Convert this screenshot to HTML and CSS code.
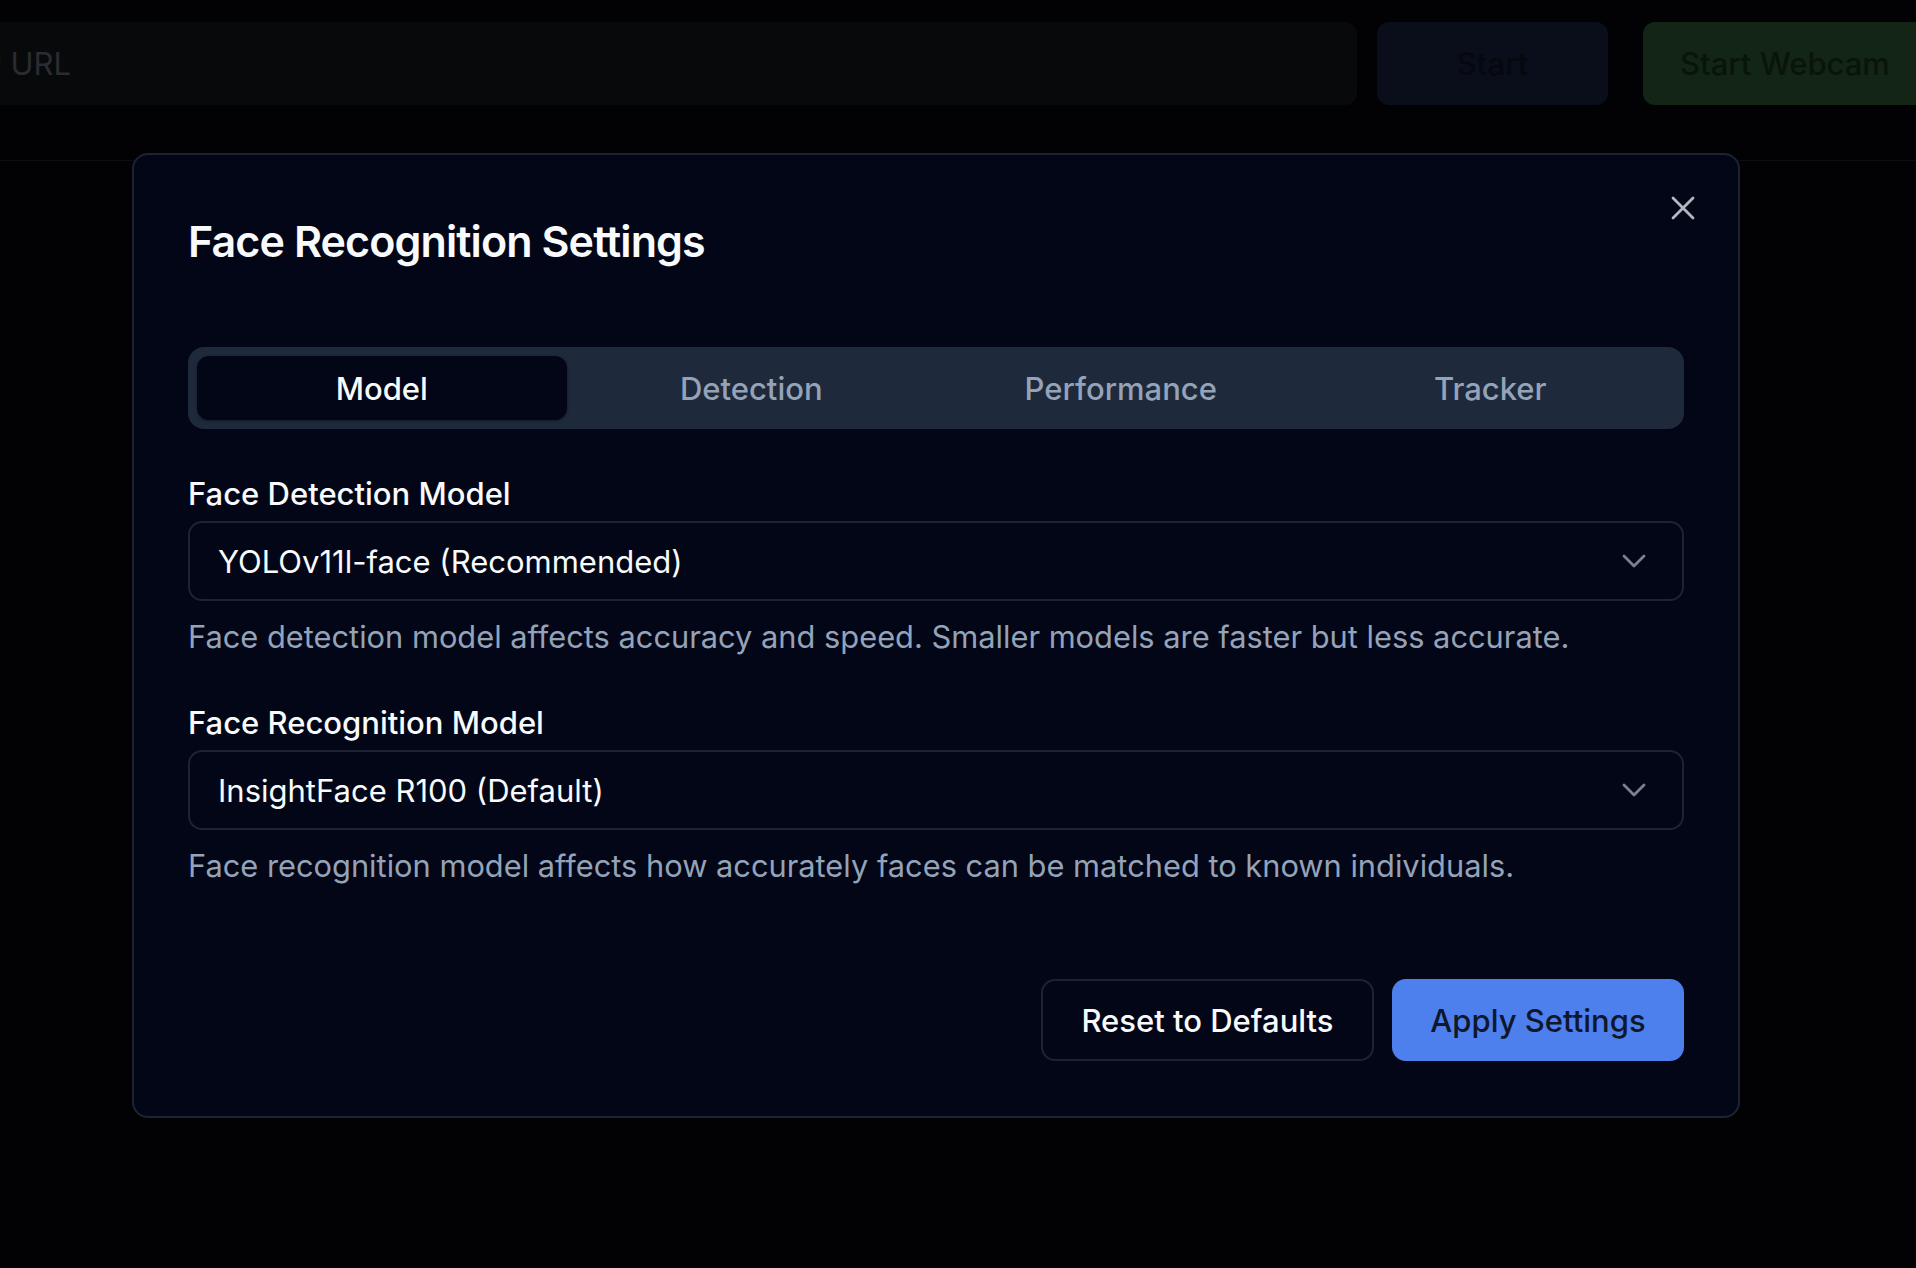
FILE: index.html
```html
<!DOCTYPE html>
<html lang="en">
<head>
<meta charset="utf-8">
<title>Face Recognition Settings</title>
<link rel="stylesheet" href="styles.css">
</head>
<body>
<div class="page">
  <header class="topbar">
    <div class="url-input"><div class="ph"><span>Enter RTSP URL</span></div></div>
    <button class="btn-start">Start</button>
    <button class="btn-webcam">Start Webcam</button>
  </header>
</div>

<div class="dialog" role="dialog">
  <button class="close" aria-label="Close">
    <svg width="24" height="24" viewBox="0 0 24 24" fill="none" stroke="currentColor" stroke-width="2.8" stroke-linecap="round"><path d="M2 2L22 22M22 2L2 22"/></svg>
  </button>
  <h2 class="title">Face Recognition Settings</h2>

  <div class="tabs">
    <div class="tab active">Model</div>
    <div class="tab">Detection</div>
    <div class="tab">Performance</div>
    <div class="tab">Tracker</div>
  </div>

  <div class="field first">
    <div class="label">Face Detection Model</div>
    <div class="select">
      <span>YOLOv11l-face (Recommended)</span>
      <svg class="chev" width="24" height="14" viewBox="0 0 24 14" fill="none" stroke="currentColor" stroke-width="2.8" stroke-linecap="round" stroke-linejoin="round"><path d="M2 2L12 12L22 2"/></svg>
    </div>
    <p class="help">Face detection model affects accuracy and speed. Smaller models are faster but less accurate.</p>
  </div>

  <div class="field">
    <div class="label">Face Recognition Model</div>
    <div class="select">
      <span>InsightFace R100 (Default)</span>
      <svg class="chev" width="24" height="14" viewBox="0 0 24 14" fill="none" stroke="currentColor" stroke-width="2.8" stroke-linecap="round" stroke-linejoin="round"><path d="M2 2L12 12L22 2"/></svg>
    </div>
    <p class="help">Face recognition model affects how accurately faces can be matched to known individuals.</p>
  </div>

  <div class="footer">
    <button class="btn-reset">Reset to Defaults</button>
    <button class="btn-apply">Apply Settings</button>
  </div>
</div>
</body>
</html>
```

FILE: styles.css
```css
* { box-sizing: border-box; }
html, body {
  margin: 0;
  height: 100%;
  overflow: hidden;
}
body {
  background: #020205;
  font-family: Inter, "Noto Sans", sans-serif;
  color: #f8fafc;
  position: relative;
}
button { font-family: inherit; }

.topbar {
  display: flex;
  align-items: stretch;
  padding-top: 22px;
  height: 161px;
  border-bottom: 1px solid #0c0d11;
}
.topbar > * { height: 83px; flex-shrink: 0; }
.url-input {
  width: 1397px;
  margin-left: -40px;
  background: #08090b;
  border-radius: 12px;
  display: flex;
  align-items: center;
}
.ph {
  width: 111px;
  display: flex;
  justify-content: flex-end;
  white-space: nowrap;
  font-size: 31px;
  color: #2a2c31;
}
.btn-start {
  width: 231px;
  margin-left: 20px;
  border: 0;
  border-radius: 12px;
  background: #090e1a;
  color: #05080f;
  font-size: 31px;
  font-weight: 500;
}
.btn-webcam {
  width: 286px;
  margin-left: 35px;
  border: 0;
  border-radius: 12px;
  background: #132514;
  color: #09150a;
  font-size: 31px;
  font-weight: 500;
  text-align: left;
  padding-left: 37px;
}

.dialog {
  position: absolute;
  left: 132px;
  top: 153px;
  width: 1608px;
  height: 965px;
  background: #020617;
  border: 2px solid #1c2434;
  border-radius: 16px;
  padding: 56px 54px;
}
.close {
  position: absolute;
  top: 40px;
  right: 42px;
  width: 26px;
  height: 26px;
  padding: 1px;
  border: 0;
  background: none;
  color: #b3b7bf;
  display: flex;
}
.title {
  margin: 12px 0 0;
  font-size: 43px;
  line-height: 36px;
  font-weight: 600;
  letter-spacing: -0.9px;
  color: #f8fafc;
}
.tabs {
  margin-top: 88px;
  height: 82px;
  padding: 9px;
  background: #1e293b;
  border-radius: 16px;
  display: grid;
  grid-template-columns: repeat(4, 1fr);
}
.tab {
  display: flex;
  align-items: center;
  justify-content: center;
  border-radius: 12px;
  font-size: 31px;
  font-weight: 500;
  color: #94a3b8;
}
.tab.active {
  background: #020617;
  color: #f8fafc;
  box-shadow: 0 1px 3px rgba(0,0,0,0.4);
}
.field.first { margin-top: 49px; }
.field { margin-top: 50px; }
.label {
  font-size: 31px;
  line-height: 32px;
  font-weight: 500;
  color: #f8fafc;
}
.select {
  margin-top: 11px;
  height: 80px;
  border: 2px solid #1c2434;
  border-radius: 14px;
  display: flex;
  align-items: center;
  justify-content: space-between;
  padding: 0 36px 0 28px;
  font-size: 31px;
  color: #f8fafc;
}
.chev { color: #7b818e; }
.help {
  margin: 16px 0 0;
  font-size: 30.8px;
  line-height: 40px;
  color: #94a3b8;
}
.footer {
  margin-top: 93px;
  display: flex;
  justify-content: flex-end;
  gap: 18px;
}
.footer button {
  height: 82px;
  border-radius: 14px;
  font-size: 31px;
  font-weight: 500;
}
.btn-reset {
  width: 333px;
  background: transparent;
  border: 2px solid #1c2434;
  color: #f8fafc;
}
.btn-apply {
  width: 292px;
  border: 0;
  background: #4d80ed;
  color: #0f172a;
}
```
